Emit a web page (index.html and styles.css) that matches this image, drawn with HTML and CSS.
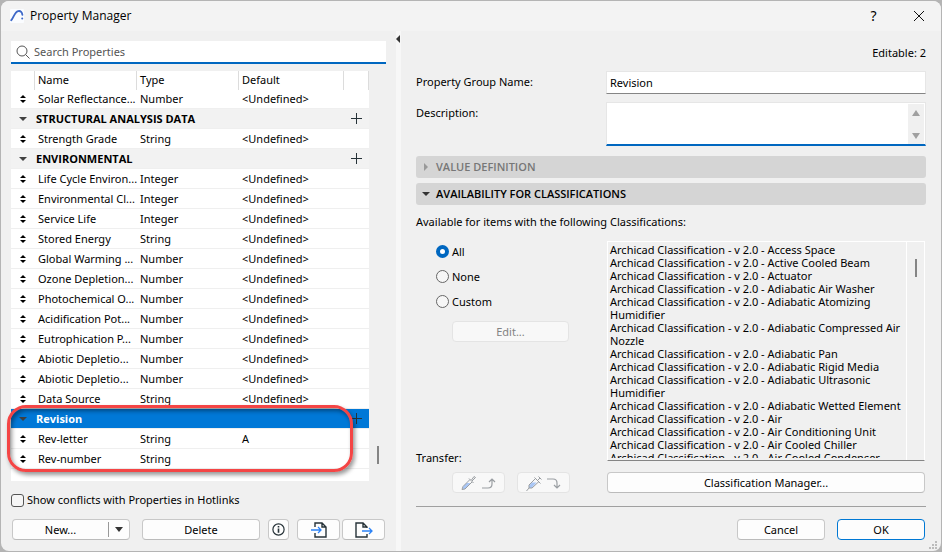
FILE: index.html
```html
<!DOCTYPE html>
<html lang="en">
<head>
  <meta charset="UTF-8" />
  <meta name="viewport" content="width=device-width, initial-scale=1.0" />
  <title>Property Manager</title>
  <link rel="stylesheet" href="styles.css">
</head>
<body>
  <div class="dialog">
    <header class="titlebar">
      <svg class="logo" viewBox="0 0 14 14" aria-hidden="true">
        <rect width="14" height="14" rx="1" fill="#fafcff" />
        <path d="M1.2 11.2C3.4 9.6 4.3 3 8.2 2.1c2.6-.5 3.9 1.300 4.200 3.700" fill="none" stroke="#3d68c8" stroke-width="1.800" stroke-linecap="round" />
        <circle cx="12.200" cy="9.600" r="1" fill="#3d68c8" />
      </svg>
      <h1>Property Manager</h1>
      <button class="title-btn" aria-label="Help">?</button>
      <button class="title-btn" aria-label="Close">
        <svg width="12" height="12" viewBox="0 0 12 12"><path d="M1 1l10 10M11 1L1 11" stroke="#111" fill="none" /></svg>
      </button>
    </header>

    <main class="content">
      <section class="left">
        <div class="search-box">
          <svg width="14" height="14" viewBox="0 0 14 14"><circle cx="6" cy="6" r="5" fill="none" stroke="#555" /><path d="M9.500 9.500l4 4" stroke="#555" /></svg>
          <input type="text" placeholder="Search Properties" aria-label="Search Properties" />
        </div>

        <div class="list">
          <div class="list-body">
            <table>
              <thead>
                <tr><th class="col-sort"></th><th class="col-name">Name</th><th class="col-type">Type</th><th class="col-default">Default</th><th></th></tr>
              </thead>
              <tbody>
                <tr><td class="sort"></td><td>Solar Reflectance...</td><td>Number</td><td>&lt;Undefined&gt;</td><td></td></tr>
                <tr class="group"><td class="arrow"></td><td colspan="3">STRUCTURAL ANALYSIS DATA</td><td><button class="add" aria-label="Add property"></button></td></tr>
                <tr><td class="sort"></td><td>Strength Grade</td><td>String</td><td>&lt;Undefined&gt;</td><td></td></tr>
                <tr class="group"><td class="arrow"></td><td colspan="3">ENVIRONMENTAL</td><td><button class="add" aria-label="Add property"></button></td></tr>
                <tr><td class="sort"></td><td>Life Cycle Environ...</td><td>Integer</td><td>&lt;Undefined&gt;</td><td></td></tr>
                <tr><td class="sort"></td><td>Environmental Cl...</td><td>Integer</td><td>&lt;Undefined&gt;</td><td></td></tr>
                <tr><td class="sort"></td><td>Service Life</td><td>Integer</td><td>&lt;Undefined&gt;</td><td></td></tr>
                <tr><td class="sort"></td><td>Stored Energy</td><td>String</td><td>&lt;Undefined&gt;</td><td></td></tr>
                <tr><td class="sort"></td><td>Global Warming ...</td><td>Number</td><td>&lt;Undefined&gt;</td><td></td></tr>
                <tr><td class="sort"></td><td>Ozone Depletion...</td><td>Number</td><td>&lt;Undefined&gt;</td><td></td></tr>
                <tr><td class="sort"></td><td>Photochemical O...</td><td>Number</td><td>&lt;Undefined&gt;</td><td></td></tr>
                <tr><td class="sort"></td><td>Acidification Pot...</td><td>Number</td><td>&lt;Undefined&gt;</td><td></td></tr>
                <tr><td class="sort"></td><td>Eutrophication P...</td><td>Number</td><td>&lt;Undefined&gt;</td><td></td></tr>
                <tr><td class="sort"></td><td>Abiotic Depletio...</td><td>Number</td><td>&lt;Undefined&gt;</td><td></td></tr>
                <tr><td class="sort"></td><td>Abiotic Depletio...</td><td>Number</td><td>&lt;Undefined&gt;</td><td></td></tr>
                <tr><td class="sort"></td><td>Data Source</td><td>String</td><td>&lt;Undefined&gt;</td><td></td></tr>
                <tr class="group selected"><td class="arrow"></td><td colspan="3">Revision</td><td><button class="add" aria-label="Add property"></button></td></tr>
                <tr><td class="sort"></td><td>Rev-letter</td><td>String</td><td>A</td><td></td></tr>
                <tr><td class="sort"></td><td>Rev-number</td><td>String</td><td></td><td></td></tr>
              </tbody>
            </table>
          </div>
          <div class="list-scroll"><span class="thumb"></span></div>
          <div class="highlight"></div>
        </div>

        <label class="check"><input type="checkbox" /> Show conflicts with Properties in Hotlinks</label>

        <div class="left-buttons">
          <div class="split">
            <button class="split-main">New...</button>
            <button class="split-arrow" aria-label="More options"></button>
          </div>
          <button class="btn btn-delete">Delete</button>
          <button class="btn btn-info" aria-label="Info">
            <svg width="13" height="13" viewBox="0 0 13 13"><circle cx="6.500" cy="6.500" r="5.600" fill="none" stroke="#263238" stroke-width="1.200" /><path d="M6.500 5.500v4.200M6.500 3v1.500" stroke="#263238" stroke-width="1.600" /></svg>
          </button>
          <div class="pair">
            <button class="btn" aria-label="Import">
              <svg width="16" height="16" viewBox="0 0 16 16"><path d="M4 5V1h7l4 4v10H4v-4M11 1v4h4" fill="none" stroke="#263238" stroke-width="1.400" /><path d="M0 8h10M7 5l3 3-3 3" fill="none" stroke="#2b82f6" stroke-width="1.300" /></svg>
            </button>
            <button class="btn" aria-label="Export">
              <svg width="18" height="16" viewBox="0 0 18 16"><path d="M12 6V5L8 1H1v14h11v-3M8 1v4h4" fill="none" stroke="#263238" stroke-width="1.400" /><path d="M7 9h10M14 6l3 3-3 3" fill="none" stroke="#2b82f6" stroke-width="1.300" /></svg>
            </button>
          </div>
        </div>
      </section>

      <div class="divider"><span class="collapse"></span></div>

      <section class="right">
        <p class="editable">Editable: 2</p>

        <div class="form">
          <label for="groupName">Property Group Name:</label>
          <input type="text" id="groupName" value="Revision" />
          <label for="description">Description:</label>
          <div class="textarea-box">
            <textarea id="description"></textarea>
            <div class="spin"><span class="up"></span><span class="down"></span></div>
          </div>
        </div>

        <button class="section disabled">VALUE DEFINITION</button>
        <button class="section open">AVAILABILITY FOR CLASSIFICATIONS</button>

        <p class="hint">Available for items with the following Classifications:</p>

        <div class="availability">
          <div class="options">
            <label><input type="radio" name="avail" checked /> All</label>
            <label><input type="radio" name="avail" /> None</label>
            <label><input type="radio" name="avail" /> Custom</label>
            <button class="btn btn-edit" disabled>Edit...</button>
            <p class="transfer-label">Transfer:</p>
          </div>
          <div class="class-list">
            <ul>
              <li>Archicad Classification - v 2.0 - Access Space</li>
              <li>Archicad Classification - v 2.0 - Active Cooled Beam</li>
              <li>Archicad Classification - v 2.0 - Actuator</li>
              <li>Archicad Classification - v 2.0 - Adiabatic Air Washer</li>
              <li>Archicad Classification - v 2.0 - Adiabatic Atomizing<br>Humidifier</li>
              <li>Archicad Classification - v 2.0 - Adiabatic Compressed Air<br>Nozzle</li>
              <li>Archicad Classification - v 2.0 - Adiabatic Pan</li>
              <li>Archicad Classification - v 2.0 - Adiabatic Rigid Media</li>
              <li>Archicad Classification - v 2.0 - Adiabatic Ultrasonic<br>Humidifier</li>
              <li>Archicad Classification - v 2.0 - Adiabatic Wetted Element</li>
              <li>Archicad Classification - v 2.0 - Air</li>
              <li>Archicad Classification - v 2.0 - Air Conditioning Unit</li>
              <li>Archicad Classification - v 2.0 - Air Cooled Chiller</li>
              <li>Archicad Classification - v 2.0 - Air Cooled Condenser</li>
            </ul>
            <div class="class-scroll"><span class="thumb"></span></div>
          </div>
          <div class="transfer">
            <button class="btn" disabled aria-label="Pick up settings">
              <svg width="36" height="16" viewBox="0 0 36 16"><path d="M2 11.500l3.500-3.500h4l-5.500 6H2z" fill="#a9c6f5" /><path d="M9 4.500L2 11.500 1 14.500l3-.5 7-7M8 3.500l4.500 4.500M10.500 5l2.500-3.500 1.500 1L11 6" fill="none" stroke="#9a9ea2" /><path d="M21 13h6q4 0 4-4V4M28 7l3-3 3 3" fill="none" stroke="#9a9ea2" stroke-width="1.200" /></svg>
            </button>
            <button class="btn" disabled aria-label="Inject settings">
              <svg width="36" height="16" viewBox="0 0 36 16"><path d="M3 10.500l3-3h4.500l-5 5.500H3z" fill="#a9c6f5" /><path d="M9.500 3.500L3 10v3l-2.500 3M3 13h3l7-6.500M8.500 2.500l6 6M11.500 5.500L14 3M12.500 1.500l3 3" fill="none" stroke="#9a9ea2" /><path d="M21 4h6q4 0 4 4v5M28 10l3 3 3-3" fill="none" stroke="#9a9ea2" stroke-width="1.200" /></svg>
            </button>
          </div>
          <button class="btn btn-manager">Classification Manager...</button>
        </div>

        <footer class="actions">
          <button class="btn">Cancel</button>
          <button class="btn primary">OK</button>
        </footer>
      </section>
    </main>

    <svg class="grip" width="9" height="9" viewBox="0 0 9 9" aria-hidden="true"><path d="M6 0h2v2H6zM3 3h2v2H3zM6 3h2v2H6zM0 6h2v2H0zM3 6h2v2H3zM6 6h2v2H6z" fill="#bbb" /></svg>
  </div>
</body>
</html>
```

FILE: styles.css
```css
* {
  margin: 0;
  padding: 0;
  box-sizing: border-box;
}
body {
  font-family: "Noto Sans", "Open Sans", sans-serif;
  font-size: 11px;
  line-height: 14px;
  color: #000;
  background: #b4b4b4;
  min-height: 100vh;
  padding: 1px;
  display: flex;
}
button,
input,
textarea {
  font: inherit;
  color: inherit;
}
svg {
  display: block;
}
.dialog {
  position: relative;
  flex: 1;
  display: flex;
  flex-direction: column;
  background: #f0f0f0;
  border-radius: 8px;
  overflow: hidden;
}

/* Title bar */
.titlebar {
  display: flex;
  align-items: center;
  height: 30px;
  padding-left: 9px;
  background: #f3f3f3;
}
.logo {
  width: 14px;
  height: 14px;
  margin-right: 6px;
}
.titlebar h1 {
  flex: 1;
  font-family: "Open Sans", "Noto Sans", sans-serif;
  font-size: 12px;
  font-weight: normal;
}
.title-btn {
  display: flex;
  align-items: center;
  justify-content: center;
  width: 45px;
  height: 28px;
  border: none;
  background: none;
  font-size: 14px;
}

.content {
  flex: 1;
  display: grid;
  grid-template-columns: 395px 5px 1fr;
}
.left {
  display: flex;
  flex-direction: column;
  padding: 10px 10px 11px;
}
.search-box {
  display: flex;
  align-items: center;
  height: 23px;
  padding-left: 5px;
  gap: 4px;
  background: #fff;
  border-bottom: 2px solid #0067c0;
}
.search-box input {
  flex: 1;
  border: none;
  outline: none;
  background: none;
}
.search-box input::placeholder {
  color: #555;
}

/* Property list */
.list {
  position: relative;
  display: flex;
  height: 410px;
  margin-top: 7px;
}
.list-body {
  flex: 1;
  background: #fff;
  overflow: hidden;
}
table {
  width: 100%;
  table-layout: fixed;
  border-collapse: separate;
  border-spacing: 0;
}
th {
  height: 19px;
  padding: 0 0 2px 3px;
  border-right: 1px solid #dcdcdc;
  font-weight: normal;
  text-align: left;
}
td {
  height: 20px;
  padding-left: 3px;
  border-bottom: 1px solid #efefef;
  white-space: nowrap;
}
tbody tr:first-child td {
  height: 19px;
}
.col-sort {
  width: 24px;
}
.col-name,
.col-type {
  width: 102px;
}
.col-default {
  width: 105px;
}
.sort,
.arrow {
  padding: 0;
}
.sort::before,
.sort::after,
.arrow::before {
  content: "";
  display: block;
  width: 0;
  margin: 0 auto;
  border: 3px solid transparent;
}
.sort::before {
  border-top: none;
  border-bottom: 3px solid #000;
}
.sort::after {
  margin-top: 2px;
  border-bottom: none;
  border-top: 3px solid #000;
}
.arrow::before {
  border-width: 4px 4px 0;
  border-top-color: #404040;
}
.group td {
  background: #f2f2f2;
  font-family: "Open Sans", "Noto Sans", sans-serif;
  font-weight: bold;
}
.group td + td {
  padding-left: 1px;
}
.selected td {
  background: #0078d7;
  color: #fff;
}
.add {
  display: block;
  width: 11px;
  height: 11px;
  margin-left: 6px;
  border: none;
  background:
    linear-gradient(#263238, #263238) center / 11px 1px no-repeat,
    linear-gradient(#263238, #263238) center / 1px 11px no-repeat;
}
.list-scroll {
  display: flex;
  align-items: flex-end;
  justify-content: center;
  width: 17px;
  padding-bottom: 17px;
}
.thumb {
  width: 2px;
  height: 18px;
  background: #858585;
}
.highlight {
  position: absolute;
  left: -4px;
  right: 33px;
  bottom: 9px;
  height: 67px;
  border: 3px solid #f44545;
  border-radius: 19px;
  box-shadow: 2px 3px 4px rgba(0, 0, 0, 0.4), inset 2px 3px 4px rgba(0, 0, 0, 0.4);
}

.check {
  display: flex;
  align-items: center;
  gap: 3px;
  margin-top: 12px;
}
.check input {
  appearance: none;
  width: 13px;
  height: 13px;
  border: 1px solid #555;
  border-radius: 3px;
  background: #f6f6f6;
}

/* Buttons */
.btn,
.split {
  display: flex;
  align-items: center;
  justify-content: center;
  height: 21px;
  border: 1px solid #c8c8c8;
  border-bottom-color: #bbb;
  border-radius: 4px;
  background: #fdfdfd;
}
.btn:disabled {
  color: #838383;
  border-color: #e4e4e4;
  background: #f8f8f8;
}
.btn.primary {
  border-color: #0078d4;
}
.left-buttons {
  display: flex;
  gap: 8px;
  margin-top: auto;
  padding-left: 1px;
}
.split {
  width: 118px;
  margin-right: 4px;
}
.split button {
  border: none;
  background: none;
}
.split-main {
  flex: 1;
}
.split .split-arrow {
  display: flex;
  justify-content: center;
  width: 21px;
  padding: 5px 0;
  border-left: 1px solid #999;
}
.split-arrow::before {
  content: "";
  border: 4px solid transparent;
  border-top: 5px solid #333;
  border-bottom: none;
}
.btn-delete {
  width: 118px;
}
.btn-info {
  width: 21px;
}
.pair {
  display: flex;
  gap: 2px;
}
.pair .btn {
  width: 43px;
}

.divider {
  padding-top: 4px;
  background: #f7f7f7;
}
.collapse {
  display: block;
  width: 0;
  border: 4px solid transparent;
  border-left: none;
  border-right: 4px solid #333;
}

/* Right side */
.right {
  display: flex;
  flex-direction: column;
  padding: 15px 15px 11px;
}
.editable {
  text-align: right;
}
.form {
  display: grid;
  grid-template-columns: 190px 1fr;
  gap: 8px 0;
  margin-top: 11px;
}
.form label {
  padding-top: 4px;
}
.form input {
  height: 23px;
  min-width: 0;
  padding: 0 3px;
  border: 1px solid #e6e6e6;
  border-bottom-color: #858585;
  background: #fff;
  outline: none;
}
.textarea-box {
  display: flex;
  height: 44px;
  padding: 1px 1px 0;
  border: 1px solid #e6e6e6;
  border-bottom: 2px solid #0067c0;
  background: #fff;
}
.textarea-box textarea {
  flex: 1;
  min-width: 0;
  border: none;
  outline: none;
  resize: none;
}
.spin {
  display: flex;
  flex-direction: column;
  align-items: center;
  justify-content: space-between;
  width: 16px;
  padding: 6px 0 5px;
  background: #f0f0f0;
}
.spin span {
  border: 4px solid transparent;
}
.spin .up {
  border-top: none;
  border-bottom: 6px solid #a0a0a0;
}
.spin .down {
  border-bottom: none;
  border-top: 6px solid #a0a0a0;
}
.section {
  display: flex;
  align-items: center;
  height: 22px;
  margin-top: 5px;
  padding-left: 6px;
  border: none;
  border-radius: 3px;
  background: #d5d5d5;
  font-family: "Open Sans", "Noto Sans", sans-serif;
  font-weight: 600;
}
.section.disabled {
  margin-top: 10px;
  color: #777;
}
.section::before {
  content: "";
  margin: 0 8px 0 2px;
  border: 4px solid transparent;
  border-left-color: #999;
  border-right: none;
}
.section.open::before {
  margin: 0 6px 0 0;
  border: 4px solid transparent;
  border-top-color: #333;
  border-bottom: none;
}
.hint {
  margin-top: 10px;
}
.availability {
  display: grid;
  grid-template-columns: 190px 1fr;
  gap: 11px 1px;
  margin-top: 12px;
  padding-right: 1px;
  padding-bottom: 13px;
  border-bottom: 1px solid #a0a0a0;
}
.options {
  display: flex;
  flex-direction: column;
}
.options label {
  display: flex;
  align-items: center;
  gap: 3px;
  height: 25px;
  padding-left: 20px;
}
.options label:first-child {
  margin-top: -2px;
}
.options input {
  appearance: none;
  width: 13px;
  height: 13px;
  border: 1px solid #666;
  border-radius: 50%;
  background: #f6f6f6;
}
.options input:checked {
  border: 4px solid #0067c0;
  background: #fff;
}
.btn-edit {
  width: 117px;
  margin: 7px 0 0 36px;
}
.transfer-label {
  margin-top: auto;
  margin-bottom: -4px;
}
.class-list {
  display: flex;
  height: 220px;
  border: 1px solid #fff;
  border-bottom-color: #858585;
  overflow: hidden;
}
.class-list ul {
  flex: 1;
  height: 216px;
  padding: 1px 2px 0;
  list-style: none;
  line-height: 13px;
  white-space: nowrap;
  overflow: hidden;
}
.class-scroll {
  display: flex;
  justify-content: center;
  width: 18px;
  padding-top: 17px;
  border-left: 1px solid #fff;
}
.transfer {
  display: flex;
  gap: 12px;
  padding-left: 36px;
}
.transfer .btn {
  width: 53px;
}
.actions {
  display: flex;
  justify-content: flex-end;
  gap: 12px;
  margin-top: auto;
  padding-right: 1px;
}
.actions .btn {
  width: 88px;
}
.grip {
  position: absolute;
  right: 3px;
  bottom: 1px;
}
```
